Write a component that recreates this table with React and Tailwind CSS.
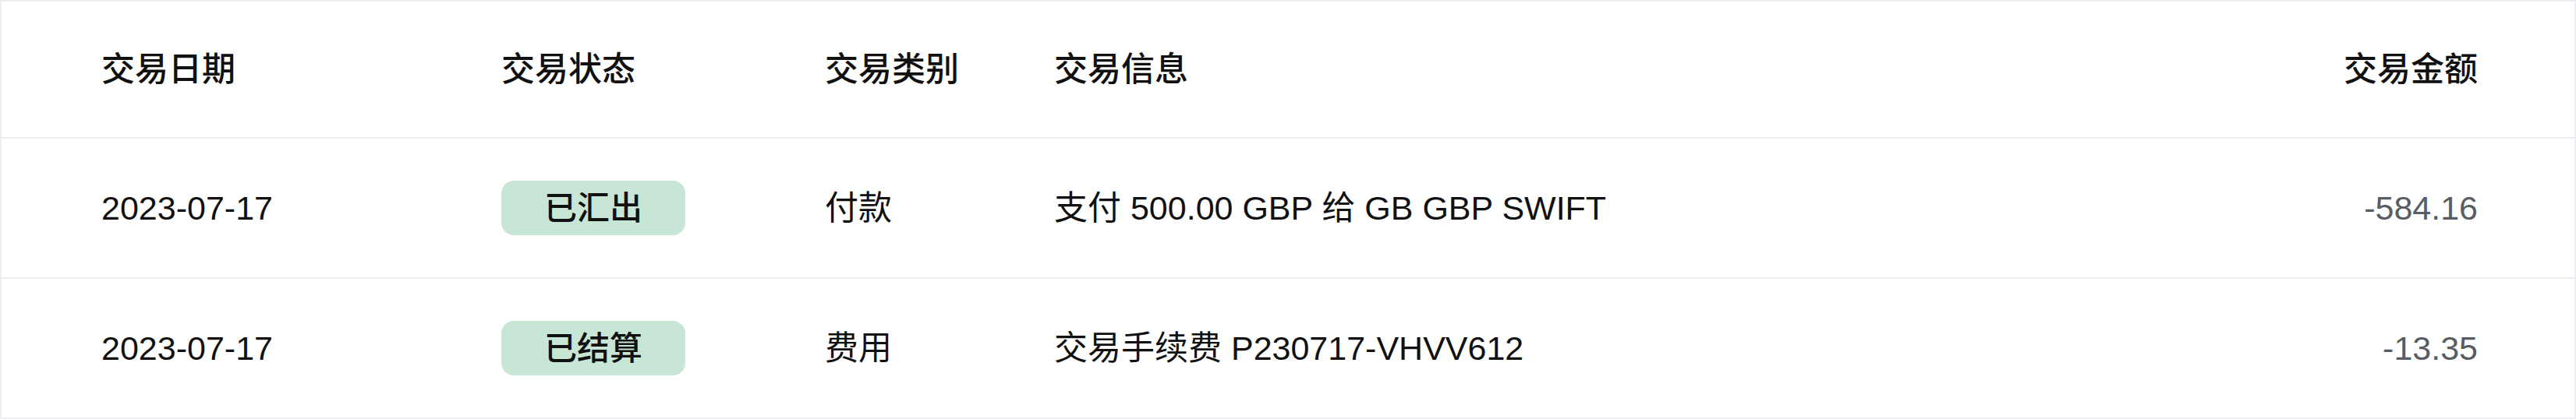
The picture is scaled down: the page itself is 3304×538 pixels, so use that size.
import React from "react";

const ROWS = [
  { date: "2023-07-17", status: "已汇出", type: "付款", info: "支付 500.00 GBP 给 GB GBP SWIFT", amount: "-584.16" },
  { date: "2023-07-17", status: "已结算", type: "费用", info: "交易手续费 P230717-VHVV612", amount: "-13.35" },
];

const COLS = "grid grid-cols-[513px_415px_294px_1fr_auto] items-center pl-[128px] pr-[124px]";

export default function App() {
  return (
    <div className="w-[3304px] h-[538px] bg-white border-2 border-[#eceef1] font-['Liberation_Sans','Noto_Sans_CJK_SC',sans-serif] text-[43px] text-[#111111]">
      {/* header */}
      <div className={`${COLS} h-[174px] font-medium`}>
        <div>交易日期</div>
        <div>交易状态</div>
        <div>交易类别</div>
        <div>交易信息</div>
        <div className="text-right">交易金额</div>
      </div>

      {ROWS.map((r, i) => (
        <div key={i} className={`${COLS} h-[180px] border-t-2 border-[#eceef1]`}>
          <div>{r.date}</div>
          <div>
            <span className="inline-flex items-center justify-center w-[236px] h-[70px] rounded-[16px] bg-[#c8e6d6] font-medium text-[42px]">
              {r.status}
            </span>
          </div>
          <div>{r.type}</div>
          <div>{r.info}</div>
          <div className="text-right text-[#585c63]">{r.amount}</div>
        </div>
      ))}
    </div>
  );
}
